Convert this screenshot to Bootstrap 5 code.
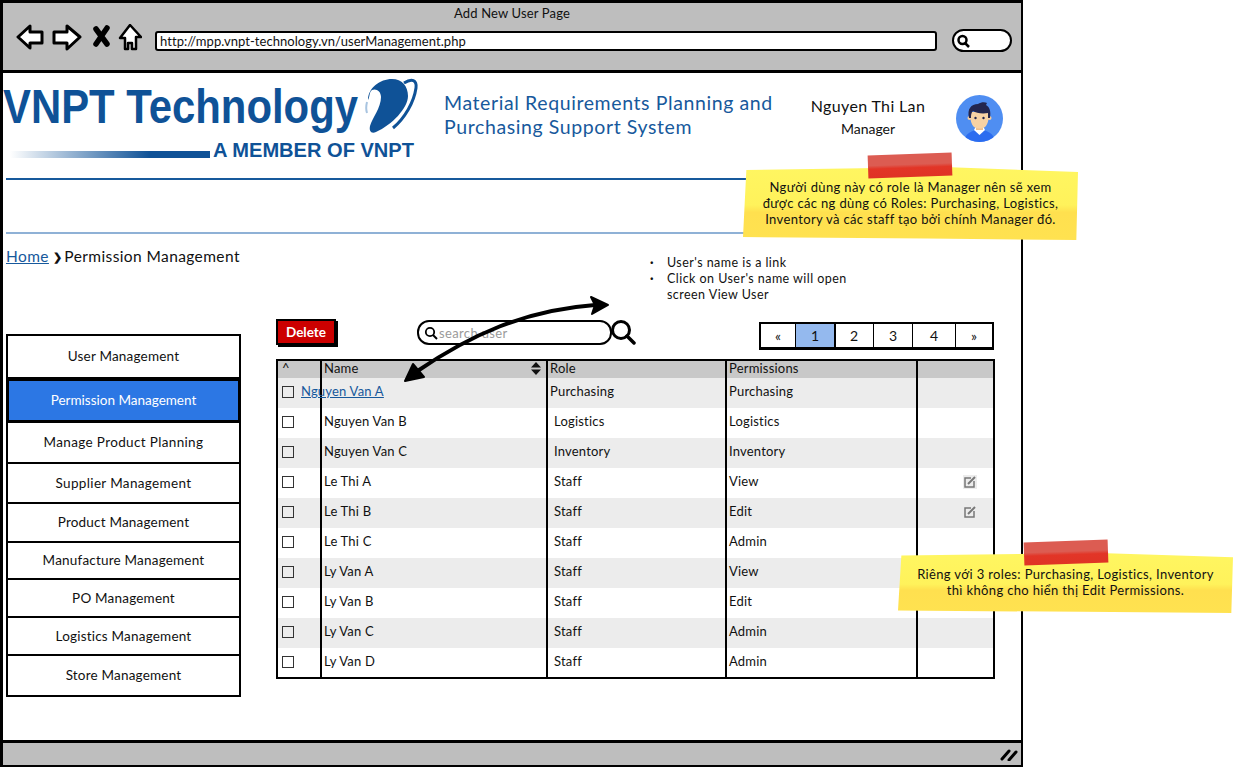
<!DOCTYPE html>
<html lang="vi">
<head>
    <meta charset="UTF-8">
    <meta name="viewport" content="width=device-width, initial-scale=1.0">
    <title>Add New User Page</title>
    <link href="https://cdn.jsdelivr.net/npm/bootstrap@5.3.0/dist/css/bootstrap.min.css" rel="stylesheet">
    <style>
        html, body { margin: 0; height: 768px; overflow: hidden; background: #fff; }
        body { font-family: Lato, "Noto Sans", sans-serif; font-size: 13px; color: #111; }
        .page-wrap { position: relative; width: 1235px; height: 768px; }
        .mock-window { width: 1023px; height: 767px; border: 3px solid #000; border-right-width: 2px; border-bottom-width: 2px; background: #fff; }
        .chrome-top { height: 70px; flex: none; background: #bebebe; border-bottom: 3px solid #000; padding: 0 9px 0 12px; }
        .chrome-title { height: 21px; line-height: 21px; text-align: center; font-size: 13px; letter-spacing: .15px; padding-right: 3px; }
        .chrome-row { height: 28px; }
        .address-bar { width: 782px; height: 20px; margin: 6px 0 0 13px; border: 2px solid #000; border-radius: 3px; background: #fff; padding-left: 3px; line-height: 16px; font-size: 13px; letter-spacing: .05px; }
        .chrome-search { width: 60px; height: 23px; margin: 5px 0 0 15px; border: 2.5px solid #000; border-radius: 12px; background: #fff; padding-left: 2px; }
        .page-head { height: 105px; flex: none; }
        .app-title { margin: 18px 0 0 4px; width: 345px; color: #17599c; font-size: 19.5px; line-height: 24px; letter-spacing: .6px; }
        .user-info { width: 130px; margin: 21px 0 0 14px; text-align: center; }
        .user-name { font-size: 16px; line-height: 24px; letter-spacing: .35px; }
        .user-role { font-size: 14px; line-height: 22px; }
        .user-pic { margin: 22px 0 0 23px; }
        .rule-top { height: 2px; margin: 0 3px; background: #17599c; flex: none; }
        .rule-gap { height: 52px; flex: none; }
        .rule-low { height: 2px; margin: 0 3px; background: #8fb1d6; flex: none; }
        .crumb-row { height: 85px; flex: none; padding-left: 3px; }
        .crumb-text { margin-top: 12px; font-size: 15.5px; line-height: 20px; letter-spacing: .4px; }
        .crumb-text a { color: #17599c; }
        .crumb-sep { display: inline-block; margin: 0 2px 0 4px; font-size: 11px; vertical-align: 1px; font-weight: 900; }
        .side-note { margin: 20px 0 0 0; padding: 0; list-style: none; position: absolute; left: 650px; top: 235px; width: 215px; font-size: 12.5px; line-height: 16px; letter-spacing: .45px; }
        .side-note li { padding-left: 17px; position: relative; }
        .side-note li::before { content: "\00b7"; position: absolute; left: 0; font-weight: 900; }
        .work-row { padding-left: 3px; }
        .side-menu { width: 235px; margin-top: 15px; margin-right: 35px; flex: none; border-radius: 0; }
        .side-menu .list-group-item { display: flex; align-items: center; justify-content: center; padding: 0; margin-top: -2px; border: 2px solid #000; border-radius: 0; color: #111; font-size: 13.5px; letter-spacing: .2px; background: #fff; }
        .side-menu .list-group-item:first-child { margin-top: 0; height: 45px; }
        .side-menu .list-group-item:nth-child(2) { height: 45px; }
        .side-menu .list-group-item:nth-child(3), .side-menu .list-group-item:nth-child(4) { height: 42px; letter-spacing: .35px; }
        .side-menu .list-group-item:nth-child(3) { height: 43px; }
        .side-menu .list-group-item:nth-child(5) { height: 41px; }
        .side-menu .list-group-item:nth-child(6) { height: 39px; }
        .side-menu .list-group-item:nth-child(7), .side-menu .list-group-item:nth-child(8) { height: 40px; }
        .side-menu .list-group-item:nth-child(9) { height: 43px; }
        .side-menu .list-group-item.active { background: #2c77e4; color: #fff; border-width: 3px; z-index: 2; letter-spacing: 0; }
        .work-main { width: 718px; }
        .tool-row { height: 40px; }
        .btn-delete { width: 60px; height: 26px; padding: 0; background: #cc0000; color: #fff; font-size: 13.5px; font-weight: 700; border: 2px solid #000; border-radius: 0; box-shadow: 2px 2px 0 #000; }
        .btn-delete:hover { background: #cc0000; color: #fff; }
        .search-box { margin-left: 81px; width: 195px; height: 25px; margin-top: 1px; padding-left: 5px; border: 2px solid #000; border-radius: 12px; background: #fff; }
        .search-box input { border: 0; padding: 0; margin-left: 1px; background: transparent; font-size: 13px; letter-spacing: .35px; width: 160px; height: 20px; outline: 0; }
        .search-box input::placeholder { color: #9a9a9a; }
        .big-glass { margin-left: -2px; }
        .pager-strip { margin: 3px 0 0 auto; border: 2px solid #000; border-bottom-width: 3px; }
        .pager-strip .page-link { display: flex; align-items: center; justify-content: center; height: 23px; padding: 0; border: 0; border-right: 2px solid #000; border-radius: 0 !important; margin: 0; color: #111; font-size: 14px; background: #fff; }
        .pager-strip .page-item:last-child .page-link { border-right: 0; }
        .pager-strip .page-item.active .page-link { background: #94b9ee; color: #111; }
        .pg-a { width: 36px; } .pg-b { width: 39px; } .pg-c { width: 43px; } .pg-d { width: 35px; }
        .data-grid { width: 717px; table-layout: fixed; border-collapse: collapse; margin: 0; border: 2px solid #000; font-size: 13px; letter-spacing: .2px; }
        .cw-a { width: 44px; } .cw-b { width: 226px; } .cw-c { width: 179px; } .cw-d { width: 191px; } .cw-e { width: 77px; }
        .data-grid th, .data-grid td { padding: 0 0 0 2px; border: 0; border-left: 2px solid #000; vertical-align: middle; overflow: visible; color: #111; box-shadow: none; }
        .data-grid th:first-child, .data-grid td:first-child { border-left: 0; padding-left: 4px; }
        .data-grid thead th { height: 18px; line-height: 15px; padding-bottom: 2px; background: #c8c8c8; font-weight: 400; }
        .data-grid tbody td { height: 30px; padding-bottom: 2px; background: #fff; }
        .data-grid tbody tr:nth-child(odd) td { background: #ececec; }
        .name-link { display: inline-block; margin-left: -23px; color: #17599c; text-decoration: underline; position: relative; }
        .role-pad { padding-left: 6px !important; }
        .row-check { width: 12px; height: 12px; margin: 0; border: 1px solid #333; border-radius: 0 !important; display: block; background-color: transparent; }
        .edit-cell { padding-left: 45px !important; }
        .edit-mark { display: block; background: #ececec; }
        .sort-mark { float: right; margin: 1px 5px 0 0; }
        .status-bar { margin-top: auto; height: 25px; flex: none; background: #bebebe; border-top: 3px solid #000; padding-right: 3px; }
        .sticky-note { position: absolute; width: 335px; text-align: center; font-size: 13px; line-height: 16px; letter-spacing: .35px; color: #111; background: linear-gradient(180deg, #fff661 0, #fff25b 52%, #ffe04f 62%, #ffe250 100%); clip-path: polygon(1% 4%, 60% 0, 100% 7%, 99.5% 100%, 55% 98%, 0 96%); }
        .note-one { left: 743px; top: 167px; height: 73px; padding-top: 12px; }
        .note-two { left: 898px; top: 553px; height: 60px; padding-top: 13px; }
        .note-tape { position: absolute; width: 84px; height: 23px; background: linear-gradient(180deg, #dc5c52 0, #dc5c52 45%, #e23527 60%, #df3325 100%); transform: rotate(-2deg); }
        .tape-one { left: 868px; top: 154px; }
        .tape-two { left: 1024px; top: 541px; }
        .arrow-layer { position: absolute; left: 0; top: 0; pointer-events: none; }
    </style>
</head>
<body>
<div class="page-wrap">
    <div class="mock-window d-flex flex-column">
        <!-- browser bar -->
        <div class="chrome-top">
            <div class="chrome-title">Add New User Page</div>
            <div class="chrome-row d-flex align-items-center">
                <svg width="127" height="28" viewBox="15 24 127 28">
                    <path d="M18 37 L30 26 L30 32 L42 32 L42 43 L30 43 L30 48 Z" fill="#fff" stroke="#000" stroke-width="3" stroke-linejoin="round"/>
                    <path d="M80 37 L67 26 L67 32 L54 32 L54 43 L67 43 L67 49 Z" fill="#fff" stroke="#000" stroke-width="3" stroke-linejoin="round"/>
                    <path d="M96 29 L107 44 M107 28 L96 44" stroke="#000" stroke-width="5.5" stroke-linecap="round"/>
                    <path d="M130 25 L141 37 L136 37 L136 49 L132 49 L132 43 L128 43 L128 49 L125 49 L125 38 L120 38 Z" fill="#fff" stroke="#000" stroke-width="2.5" stroke-linejoin="round"/>
                </svg>
                <div class="address-bar">http://mpp.vnpt-technology.vn/userManagement.php</div>
                <div class="chrome-search d-flex align-items-center">
                    <svg width="14" height="14" viewBox="0 0 14 14"><circle cx="6.5" cy="6" r="4" fill="none" stroke="#000" stroke-width="2.5"/><path d="M9 9 L13 13" stroke="#000" stroke-width="2.5"/></svg>
                </div>
            </div>
        </div>

        <!-- logo, title, user -->
        <div class="page-head d-flex">
            <svg width="437" height="105" viewBox="3 73 437 105">
                <defs>
                    <linearGradient id="barFade" x1="0" x2="1" y1="0" y2="0">
                        <stop offset="0" stop-color="#0f5297" stop-opacity="0"/>
                        <stop offset=".7" stop-color="#0f5297"/>
                    </linearGradient>
                </defs>
                <text x="3" y="123" font-family="Liberation Sans" font-weight="700" font-size="48" fill="#0f5297" textLength="355" lengthAdjust="spacingAndGlyphs">VNPT Technology</text>
                <path d="M368 100 C368 88 380 79 392 79 C402 79 408 86 408 96 C408 108 392 125 376 132 C371 134 369 131 370 126 C372 118 381 108 381 97 C381 91 376 88 372 90 C369 92 370 97 368 100 Z" fill="#0f5297"/>
                <path d="M404 83 C412 78 417 80 416 88 C414 102 405 118 393 128" fill="none" stroke="#0f5297" stroke-width="3"/>
                <path d="M367 102 C366 106 366 110 367 113" fill="none" stroke="#a8c4e0" stroke-width="2"/>
                <rect x="10" y="151" width="200" height="7" fill="url(#barFade)"/>
                <text x="213" y="157" font-family="Liberation Sans" font-weight="700" font-size="20" fill="#0f5297" textLength="201" lengthAdjust="spacingAndGlyphs">A MEMBER OF VNPT</text>
            </svg>
            <div class="app-title">Material Requirements Planning and Purchasing Support System</div>
            <div class="user-info">
                <div class="user-name">Nguyen Thi Lan</div>
                <div class="user-role">Manager</div>
            </div>
            <svg class="user-pic" width="47" height="47" viewBox="0 0 47 47">
                <defs><clipPath id="picClip"><circle cx="23.5" cy="23.5" r="23.5"/></clipPath></defs>
                <circle cx="23.5" cy="23.5" r="23.5" fill="#4f8ef2"/>
                <g clip-path="url(#picClip)">
                    <path d="M8 47 C9 38 16 35 23.5 35 C31 35 38 38 39 47 Z" fill="#2b6cf0"/>
                    <path d="M18 35 L23.5 40 L29 35 L27 31 L20 31 Z" fill="#fff"/>
                    <rect x="20" y="28" width="7" height="7" fill="#eec08f"/>
                    <circle cx="13.5" cy="23" r="2" fill="#f5cd9f"/><circle cx="33.5" cy="23" r="2" fill="#f5cd9f"/>
                    <path d="M14 17 C14 32 19 33.5 23.5 33.5 C28 33.5 33 32 33 17 Z" fill="#f7d2a4"/>
                    <path d="M13 23 C11 14 15 9 22 9 C25 7 29 7 31 8 L30 10 C34 12 35 17 34 23 L32 23 L32 18 C26 19 20 18 17 16 C15 18 15 20 15 23 Z" fill="#23264f"/>
                    <circle cx="19.5" cy="23" r="1.2" fill="#23264f"/><circle cx="27.5" cy="23" r="1.2" fill="#23264f"/>
                </g>
            </svg>
        </div>
        <div class="rule-top"></div>
        <div class="rule-gap"></div>
        <div class="rule-low"></div>

        <!-- breadcrumb -->
        <div class="crumb-row">
            <div class="crumb-text"><a href="#">Home</a><span class="crumb-sep">&#10095;</span>Permission Management</div>
        </div>

        <!-- menu and table -->
        <div class="work-row d-flex">
            <div class="list-group side-menu">
                <a href="#" class="list-group-item">User Management</a>
                <a href="#" class="list-group-item active">Permission Management</a>
                <a href="#" class="list-group-item">Manage Product Planning</a>
                <a href="#" class="list-group-item">Supplier Management</a>
                <a href="#" class="list-group-item">Product Management</a>
                <a href="#" class="list-group-item">Manufacture Management</a>
                <a href="#" class="list-group-item">PO Management</a>
                <a href="#" class="list-group-item">Logistics Management</a>
                <a href="#" class="list-group-item">Store Management</a>
            </div>
            <div class="work-main">
                <div class="tool-row d-flex align-items-start">
                    <button type="button" class="btn btn-delete">Delete</button>
                    <div class="search-box d-flex align-items-center">
                        <svg width="14" height="14" viewBox="0 0 14 14"><circle cx="6" cy="6" r="4.2" fill="none" stroke="#000" stroke-width="1.8"/><path d="M9 9 L13 13" stroke="#000" stroke-width="2"/></svg>
                        <input type="text" placeholder="search user">
                    </div>
                    <svg class="big-glass" width="26" height="26" viewBox="0 0 26 26"><circle cx="11" cy="11" r="8.5" fill="none" stroke="#000" stroke-width="3"/><path d="M17 17 L24 24" stroke="#000" stroke-width="3.5" stroke-linecap="round"/></svg>
                    <ul class="pagination pager-strip mb-0">
                        <li class="page-item pg-a"><a class="page-link" href="#">&laquo;</a></li>
                        <li class="page-item pg-b active"><a class="page-link" href="#">1</a></li>
                        <li class="page-item pg-b"><a class="page-link" href="#">2</a></li>
                        <li class="page-item pg-b"><a class="page-link" href="#">3</a></li>
                        <li class="page-item pg-c"><a class="page-link" href="#">4</a></li>
                        <li class="page-item pg-d"><a class="page-link" href="#">&raquo;</a></li>
                    </ul>
                </div>
                <table class="table data-grid">
                    <colgroup><col class="cw-a"><col class="cw-b"><col class="cw-c"><col class="cw-d"><col class="cw-e"></colgroup>
                    <thead>
                        <tr>
                            <th>^</th>
                            <th>Name<svg class="sort-mark" width="10" height="13" viewBox="0 0 10 13"><path d="M5 0 L10 5.5 L0 5.5 Z M0 7.5 L10 7.5 L5 13 Z" fill="#111"/></svg></th>
                            <th>Role</th>
                            <th>Permissions</th>
                            <th></th>
                        </tr>
                    </thead>
                    <tbody id="grid-body"></tbody>
                </table>
            </div>
        </div>

        <div class="status-bar d-flex justify-content-end align-items-center">
            <svg width="18" height="14" viewBox="0 0 18 14"><path d="M2 12 L9 4 M9 13 L16 5" stroke="#000" stroke-width="3" stroke-linecap="round"/></svg>
        </div>
    </div>

    <ul class="side-note">
        <li>User's name is a link</li>
        <li>Click on User's name will open screen View User</li>
    </ul>

    <!-- sticky notes -->
    <div class="sticky-note note-one">Người dùng này có role là Manager nên sẽ xem<br>được các ng dùng có Roles: Purchasing, Logistics,<br>Inventory và các staff tạo bởi chính Manager đó.</div>
    <div class="note-tape tape-one"></div>
    <div class="sticky-note note-two">Riêng với 3 roles: Purchasing, Logistics, Inventory<br>thì không cho hiển thị Edit Permissions.</div>
    <div class="note-tape tape-two"></div>

    <svg class="arrow-layer" width="1235" height="768" viewBox="0 0 1235 768">
        <path d="M416 372 C470 335 525 310 595 305" fill="none" stroke="#000" stroke-width="4"/>
        <path d="M608 305 L591 297 L595 305 L592 314 Z" fill="#000" stroke="#000" stroke-width="2" stroke-linejoin="round"/>
        <path d="M405 381 L424 377 L413 364 Z" fill="#000" stroke="#000" stroke-width="2" stroke-linejoin="round"/>
    </svg>
</div>

<script>
    var rows = [
        ['Nguyen Van A', 'Purchasing', 'Purchasing', false],
        ['Nguyen Van B', 'Logistics', 'Logistics', false],
        ['Nguyen Van C', 'Inventory', 'Inventory', false],
        ['Le Thi A', 'Staff', 'View', true],
        ['Le Thi B', 'Staff', 'Edit', true],
        ['Le Thi C', 'Staff', 'Admin', false],
        ['Ly Van A', 'Staff', 'View', false],
        ['Ly Van B', 'Staff', 'Edit', false],
        ['Ly Van C', 'Staff', 'Admin', false],
        ['Ly Van D', 'Staff', 'Admin', false]
    ];
    var editIcon = '<svg class="edit-mark" width="14" height="14" viewBox="0 0 14 14"><path d="M8 3 H2 V12 H11 V6" fill="none" stroke="#777" stroke-width="1.5"/><path d="M5 9 L12 2" stroke="#777" stroke-width="2"/></svg>';
    var html = '';
    rows.forEach(function(r, i) {
        var nameCell = i === 0 ? '<a href="#" class="name-link">' + r[0] + '</a>' : r[0];
        html += '<tr><td><input type="checkbox" class="form-check-input row-check"></td>'
            + '<td>' + nameCell + '</td>'
            + '<td' + (i === 0 ? '' : ' class="role-pad"') + '>' + r[1] + '</td>'
            + '<td>' + r[2] + '</td>'
            + '<td' + (r[3] ? ' class="edit-cell"' : '') + '>' + (r[3] ? editIcon : '') + '</td></tr>';
    });
    document.getElementById('grid-body').innerHTML = html;
</script>
<script src="https://cdn.jsdelivr.net/npm/bootstrap@5.3.0/dist/js/bootstrap.bundle.min.js"></script>
</body>
</html>
